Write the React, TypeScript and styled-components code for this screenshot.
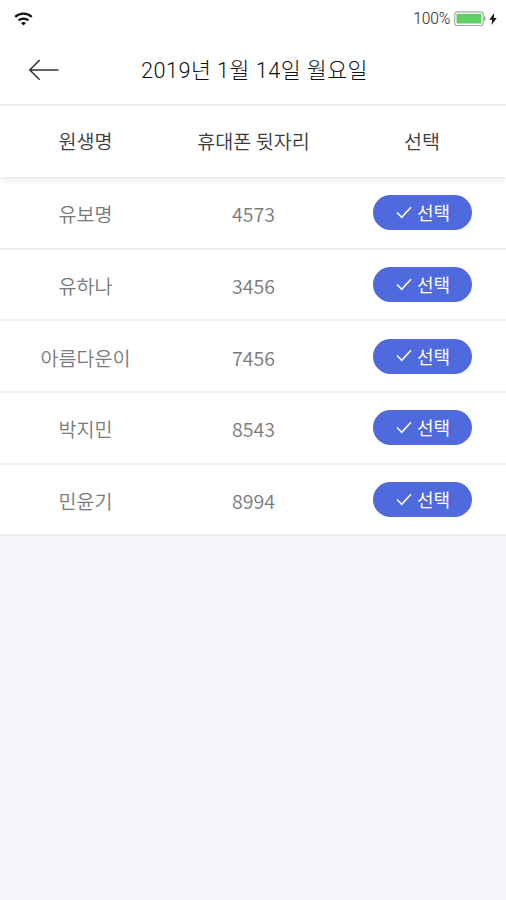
import React from "react";
import styled, { createGlobalStyle } from "styled-components";

const GlobalStyle = createGlobalStyle`
  *, *::before, *::after { box-sizing: border-box; }
  body {
    margin: 0;
    background: #f5f5fb;
    font-family: "Noto Sans CJK KR", sans-serif;
  }
`;

const Screen = styled.main`
  display: flex;
  flex-direction: column;
  min-height: 900px;
  background: #f5f5fb;
`;

const StatusBar = styled.div`
  display: flex;
  justify-content: space-between;
  align-items: center;
  height: 36px;
  padding: 1px 9px 0 14px;
  background: #fff;
`;

const BatteryStatus = styled.div`
  display: flex;
  align-items: center;
  font: 300 15.6px/20px Roboto, sans-serif;
  letter-spacing: -0.2px;
  color: #222;
`;

const BatteryIcon = styled.svg`
  margin-left: 4px;
`;

const BoltIcon = styled.svg`
  margin-left: 2px;
`;

const TitleBar = styled.header`
  display: grid;
  grid-template-columns: 60px 1fr 57px;
  align-items: center;
  height: 70px;
  background: #fff;
  border-bottom: 2px solid #f1f1f1;
`;

const BackButton = styled.button`
  display: flex;
  width: 32px;
  height: 24px;
  margin-left: 28px;
  padding: 0;
  border: 0;
  background: none;
`;

const Title = styled.h1`
  margin: 0;
  padding-top: 2px;
  font: 300 21.7px/32px Roboto, "Noto Sans CJK KR", sans-serif;
  letter-spacing: 0.45px;
  text-align: center;
  white-space: nowrap;
  color: #111;
`;

const Row = styled.div`
  display: grid;
  grid-template-columns: 171px 165px 172px;
  align-items: center;
  justify-items: center;
  height: 71.7px;
  background: #fff;
  border-bottom: 2px solid #f0f0f2;
  color: #7a7a7a;
`;

const HeaderRow = styled(Row)`
  position: relative;
  height: 71px;
  padding: 0 0 1px;
  border-bottom: 0;
  color: #3c3c3c;
  box-shadow: 0 2px 7px rgba(0, 0, 0, 0.12);
`;

const List = styled.div`
  padding-top: 1px;
  background: #fff;
`;

const Cell = styled.span`
  font-size: 19.6px;
  font-weight: 350;
  line-height: 28px;
  white-space: nowrap;
`;

const RowCell = styled(Cell)`
  padding-top: 3px;
`;

const SelectButton = styled.button`
  display: flex;
  align-items: center;
  justify-content: center;
  gap: 5px;
  width: 99px;
  height: 35px;
  padding: 0 0 1px 2px;
  border: 0;
  border-radius: 18px;
  background: #4f6adc;
  color: #fff;
  font: 400 18px/26px "Noto Sans CJK KR", sans-serif;
`;

const students = [
  { name: "유보명", phone: "4573" },
  { name: "유하나", phone: "3456" },
  { name: "아름다운이", phone: "7456" },
  { name: "박지민", phone: "8543" },
  { name: "민윤기", phone: "8994" },
];

const Wifi = () => (
  <svg width="19" height="14" viewBox="0 0 19 14" fill="none" stroke="#151515">
    <path d="M1.2 4.8C5.8.5 13.2.5 17.8 4.8" strokeWidth="2.3" />
    <path d="M4.6 8.4c2.8-2.5 7-2.5 9.8 0" strokeWidth="2.3" />
    <path d="M7 11c1.5-1.3 3.5-1.3 5 0L9.5 13.6Z" fill="#151515" stroke="none" />
  </svg>
);

const App = () => (
  <>
    <GlobalStyle />
    <Screen>
      <StatusBar>
        <Wifi />
        <BatteryStatus>
          100%
          <BatteryIcon width="33" height="16" viewBox="0 0 33 16">
            <rect x="0.7" y="0.9" width="28.6" height="13.6" rx="2.5" fill="#fff" stroke="#aaa" strokeWidth="1.2" />
            <rect x="2.5" y="2.8" width="25" height="9.8" rx="0.8" fill="#60d066" />
            <path d="M30 4.8q3.4 2.9 0 5.8Z" fill="#aaa" />
          </BatteryIcon>
          <BoltIcon width="8" height="12" viewBox="0 0 8 12">
            <path d="M5.2 0 .3 6.8h2.9L2.5 12 7.7 4.9H4.8Z" fill="#151515" />
          </BoltIcon>
        </BatteryStatus>
      </StatusBar>
      <TitleBar>
        <BackButton aria-label="뒤로">
          <svg width="32" height="24" viewBox="0 0 32 24" fill="none" stroke="#333" strokeWidth="1.5">
            <path d="M30.5 12H2M11.7 2 1.8 12l9.9 9.7" />
          </svg>
        </BackButton>
        <Title>2019년 1월 14일 월요일</Title>
      </TitleBar>
      <HeaderRow>
        <Cell>원생명</Cell>
        <Cell>휴대폰 뒷자리</Cell>
        <Cell>선택</Cell>
      </HeaderRow>
      <List>
        {students.map((student) => (
          <Row key={student.phone}>
            <RowCell>{student.name}</RowCell>
            <RowCell>{student.phone}</RowCell>
            <SelectButton>
              <svg width="16" height="13" viewBox="0 0 16 13" fill="none" stroke="#fff" strokeWidth="1.6">
                <path d="m1 6.5 4.7 4.8L15 1.3" />
              </svg>
              선택
            </SelectButton>
          </Row>
        ))}
      </List>
    </Screen>
  </>
);

export default App;
